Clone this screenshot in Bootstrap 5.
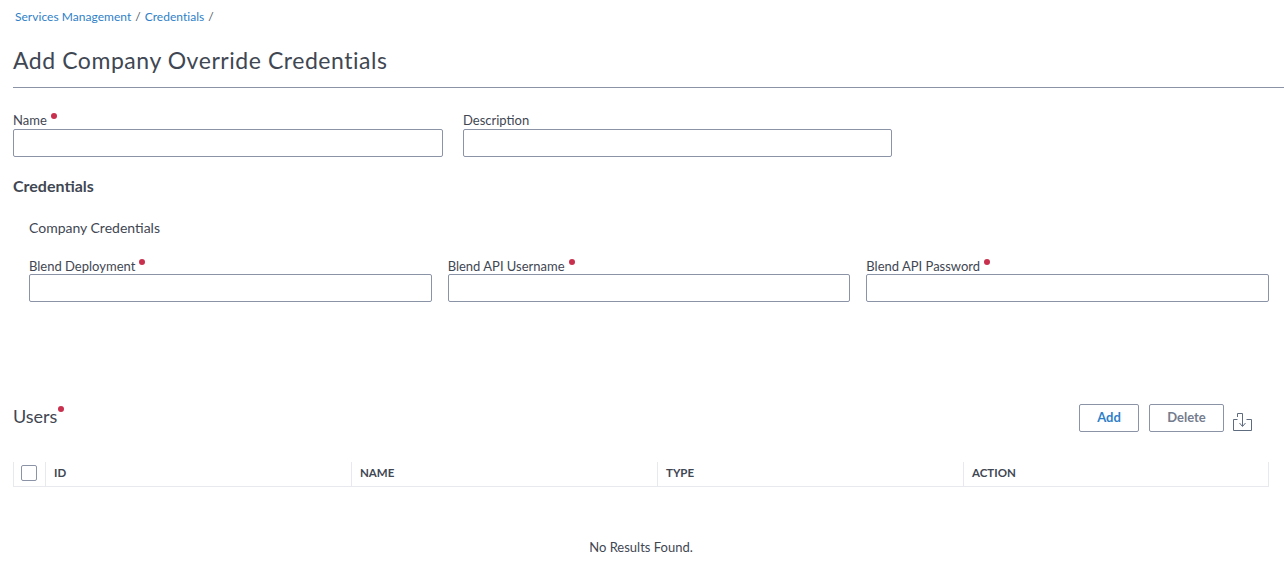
<!DOCTYPE html>
<html lang="en">
<head>
<meta charset="utf-8">
<title>Add Company Override Credentials</title>
<link href="https://cdn.jsdelivr.net/npm/bootstrap@5.3.0/dist/css/bootstrap.min.css" rel="stylesheet">
<style>
body{font-family:Lato,"Liberation Sans",sans-serif;font-size:13px;color:#3f4753;background:#fff;overflow:hidden}
.page-wrap{padding:0 15px 0 13px;height:561px}
.crumbs{margin:0;padding:9px 2px 0;font-size:12px;line-height:15px;height:25px;letter-spacing:.03px}
.crumbs a{color:#2f7fc8;text-decoration:none}
.crumbs .sep{margin:0 4px;color:#4b5563}
.page-title{font-size:23px;font-weight:400;line-height:30px;margin:20px 0 0;color:#3f4753;letter-spacing:.55px}
.rule{height:1px;background:#8b93a7;margin:12px -15px 0 0}
.fld-label{display:block;line-height:16px;margin:0 0 1px;font-size:13px;height:16px}
.req::after{content:"";display:inline-block;width:6px;height:6px;border-radius:50%;background:#c9304e;margin-left:4px;vertical-align:6px}
.fld-input{display:block;width:100%;height:28px;border:1px solid #8b93a7;border-radius:2px;background:#fff;padding:0 6px}
.top-fields{margin-top:24px;width:879px;display:grid;grid-template-columns:430px 429px;column-gap:20px}
.sect-title{font-size:16px;font-weight:700;line-height:20px;margin:19px 0 0;color:#3f4753}
.cred-block{padding-left:16px}
.cred-sub{line-height:18px;margin-top:23px;font-size:14px}
.cred-fields{margin-top:21px;display:grid;grid-template-columns:repeat(3,1fr);column-gap:16px}
.cred-fields .fld-label{margin-bottom:0}
.users-bar{margin-top:102px;height:58px;display:flex;align-items:flex-start}
.users-title{font-size:18px;line-height:24px;margin:0;padding-top:0;font-weight:400}
.users-title.req::after{margin-left:1px;vertical-align:11px}
.act{height:28px;border:1px solid #8b93a7;border-radius:2px;background:#fff;font-size:13px;font-weight:700;padding:0 0 2px;line-height:24px}
.act-add{width:60px;color:#2f7fc8}
.act-del{width:75px;color:#747c8e;margin-left:10px}
.dl-icon{margin:8px 17px 0 9px;flex:none}
.res-table{display:grid;grid-template-columns:31px repeat(3,306px) 1fr;height:25px;border-bottom:1px solid #e8e9ef;border-left:1px solid #e8e9ef;border-right:1px solid #e8e9ef}
.res-cell{border-left:1px solid #e8e9ef;padding-left:8px;font-size:11.5px;font-weight:700;line-height:22px;color:#3f4753}
.res-cell:first-child{border-left:0;padding:3px 0 0 7px}
.res-check{display:block;width:16px;height:16px;border:1px solid #8b93a7;border-radius:2px;background:#fff}
.no-res{text-align:center;margin-top:51px;line-height:18px;font-size:13px}
</style>
</head>
<body>
<div class="page-wrap">
  <nav class="crumbs"><a href="#">Services Management</a><span class="sep">/</span><a href="#">Credentials</a><span class="sep">/</span></nav>
  <h1 class="page-title">Add Company Override Credentials</h1>
  <div class="rule"></div>
  <div class="top-fields">
    <div><label class="fld-label"><span class="req">Name</span></label><input class="fld-input" type="text"></div>
    <div><label class="fld-label">Description</label><input class="fld-input" type="text"></div>
  </div>
  <h2 class="sect-title">Credentials</h2>
  <div class="cred-block">
    <div class="cred-sub">Company Credentials</div>
    <div class="cred-fields">
      <div><label class="fld-label"><span class="req">Blend Deployment</span></label><input class="fld-input" type="text"></div>
      <div><label class="fld-label"><span class="req">Blend API Username</span></label><input class="fld-input" type="text"></div>
      <div><label class="fld-label"><span class="req">Blend API Password</span></label><input class="fld-input" type="text"></div>
    </div>
  </div>
  <div class="users-bar">
    <h3 class="users-title req">Users</h3>
    <div class="d-flex ms-auto">
      <button class="act act-add" type="button">Add</button>
      <button class="act act-del" type="button">Delete</button>
      <svg class="dl-icon" width="19" height="20" viewBox="0 0 19 20" fill="none" stroke="#5f6b7f" stroke-width="1"><path d="M4.5 7.5H.5v11h18v-11h-5"/><path d="M4.5 5V1.500h5V14"/><path d="M6.500 11l3 3.500 3-3.500"/></svg>
    </div>
  </div>
  <div class="res-table">
    <div class="res-cell"><span class="res-check"></span></div>
    <div class="res-cell">ID</div>
    <div class="res-cell">NAME</div>
    <div class="res-cell">TYPE</div>
    <div class="res-cell">ACTION</div>
  </div>
  <div class="no-res">No Results Found.</div>
</div>
<script src="https://cdn.jsdelivr.net/npm/bootstrap@5.3.0/dist/js/bootstrap.bundle.min.js"></script>
</body>
</html>
